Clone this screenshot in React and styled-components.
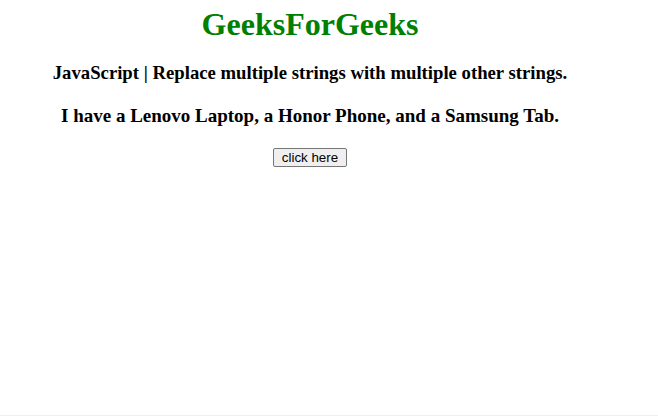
import React from 'react'
import styled, { createGlobalStyle } from 'styled-components'

const GlobalStyle = createGlobalStyle`
  body {
    margin: 0;
    background: #fff;
    font-family: "Liberation Serif", "Times New Roman", serif;
  }
`

const Frame = styled.div`
  box-sizing: border-box;
  height: 416px;
  border-bottom: 1px solid #f0f0f0;
`

const Page = styled.div`
  width: 604px;
  margin-left: 8px;
  padding-top: 6px;
  display: flex;
  flex-direction: column;
  align-items: center;
  gap: 20px;
  text-align: center;
`

const Title = styled.h1`
  margin: 0;
  font-size: 32px;
  line-height: 36px;
  font-weight: bold;
  color: green;
`

const Line = styled.p`
  margin: 0;
  font-size: ${props => props.$size}px;
  line-height: 22px;
  font-weight: bold;
  color: #000;
  margin-top: ${props => props.$push || 0}px;
`

const Button = styled.button`
  margin-top: 1px;
  font-family: "Liberation Sans", Arial, sans-serif;
  font-size: 13.33px;
  line-height: 15px;
  padding: 1px 8px;
  color: #000;
  background: #efefef;
  border: 1px solid #767676;
  border-radius: 2px;
`

class App extends React.Component {
  render () {
    return (
      <Frame>
        <GlobalStyle />
        <Page>
          <Title>GeeksForGeeks</Title>
          <Line $size={18.72}>JavaScript | Replace multiple strings with multiple other strings.</Line>
          <Line $size={19} $push={1}>I have a Lenovo Laptop, a Honor Phone, and a Samsung Tab.</Line>
          <Button>click here</Button>
        </Page>
      </Frame>
    )
  }
}

export default App
